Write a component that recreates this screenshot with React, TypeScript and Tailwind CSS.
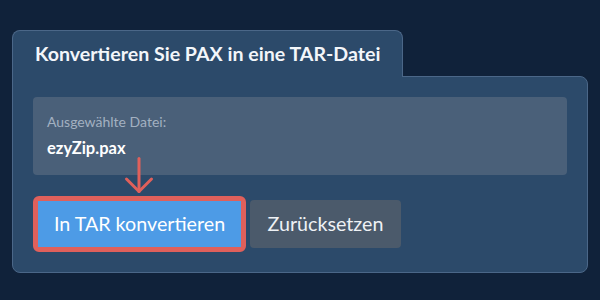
import React from 'react';

const ArrowDown: React.FC = () => (
    <svg
        className="absolute left-[124px] top-[157px] w-[30px] h-[38px]"
        viewBox="0 0 30 38"
        fill="none"
        stroke="#e0605b"
        strokeWidth="3"
        strokeLinecap="round"
        strokeLinejoin="round"
    >
        <path d="M15 1.5 V34.5" />
        <path d="M2.5 22 L15 34.5 L27.5 22" />
    </svg>
);

export default function App() {
    return (
        <div className="relative w-[600px] h-[300px] bg-[#10223a] pt-[30px] px-[12px] font-['Lato',sans-serif]">
            <div className="relative z-10 inline-block -mb-px bg-[#2c4a6a] border-x border-t border-[#4b6788] rounded-t-lg px-[22px] pt-[9px] pb-[9px]">
                <h2 className="text-[19.6px] leading-[28px] font-bold text-[#f3f6fa]">Konvertieren Sie PAX in eine TAR-Datei</h2>
            </div>
            <div className="bg-[#2c4a6a] border border-[#4b6788] rounded-b-lg rounded-tr-lg p-5">
                <div className="bg-[#4a6079] rounded px-[14px] py-[15px] mb-[21px]">
                    <p className="text-[14px] leading-[20px] text-[#a3b1c1]">Ausgewählte Datei:</p>
                    <p className="mt-1 text-[16.5px] leading-[24px] font-bold text-white">ezyZip.pax</p>
                </div>
                <div className="flex items-center">
                    <div className="border-[5px] border-[#e0605b] rounded-md">
                        <button className="block w-[203px] h-[46px] bg-[#4d9be6] text-white text-[19.7px] leading-none">
                            In TAR konvertieren
                        </button>
                    </div>
                    <button className="ml-[4px] w-[151px] h-[48px] bg-[#4b5a6b] rounded text-[#eef1f5] text-[19.7px] leading-none">
                        Zurücksetzen
                    </button>
                </div>
            </div>
            <ArrowDown />
        </div>
    );
}
